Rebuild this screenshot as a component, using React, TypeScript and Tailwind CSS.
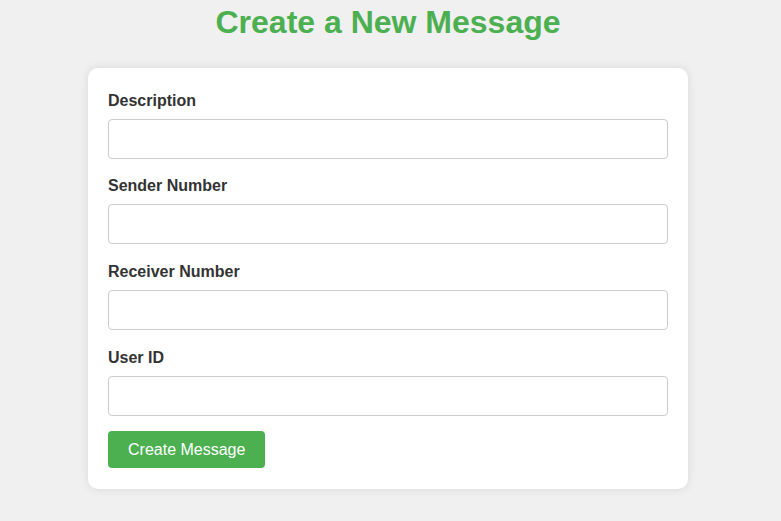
export default function App() {
  const fields = [
    { name: "Description", cls: "" },
    { name: "Sender Number", cls: "mt-[18px]" },
    { name: "Receiver Number", cls: "mt-[19px]" },
    { name: "User ID", cls: "mt-[19px]" },
  ];
  return (
    <div className="min-h-[521px] w-full bg-[#f0f0f0] pr-[5px] pt-[4px]" style={{ fontFamily: '"Liberation Sans", Arial, sans-serif' }}>
      <h1 className="m-0 text-center text-[32px] font-bold leading-[37px] text-[#4caf50]">Create a New Message</h1>
      <div className="mx-auto mt-[27px] w-[600px] rounded-[10px] bg-white px-[20px] pb-[21px] pt-[24px] shadow-[0_0_10px_rgba(0,0,0,0.1)]">
        {fields.map((f) => (
          <div key={f.name} className={f.cls}>
            <label className="mb-[9px] block text-[16px] font-bold leading-[18px] text-[#333]">{f.name}</label>
            <input className="box-border block h-[40px] w-full rounded-[4px] border border-[#ccc] px-[10px] text-[16px] outline-none" />
          </div>
        ))}
        <button className="mt-[15px] h-[37px] rounded-[4px] bg-[#4caf50] px-[20px] text-[16px] leading-[18px] text-white">Create Message</button>
      </div>
    </div>
  );
}
